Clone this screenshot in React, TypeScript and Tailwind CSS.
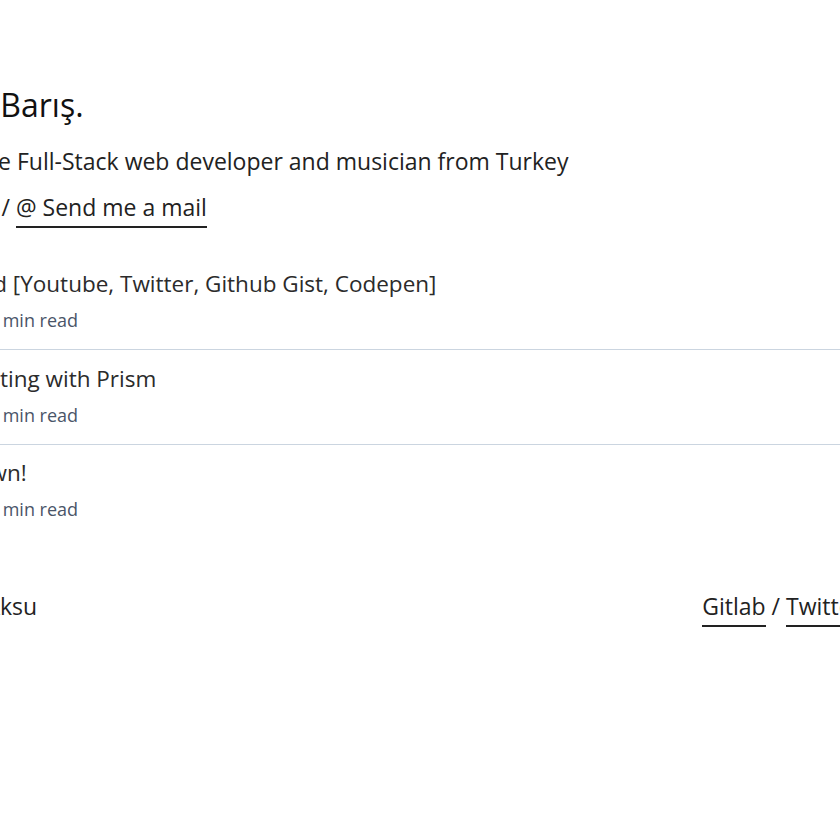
const posts = [
  { lead: "Embed", rest: " [Youtube, Twitter, Github Gist, Codepen]", w: "w-[307px]", date: "Oct 12, 2019 · 4" },
  { lead: "Syntax Highligh", rest: "ting with Prism", w: "w-[300px]", date: "Sep 28, 2019 · 2" },
  { lead: "Hello World, Markdow", rest: "n!", w: "w-[307px]", date: "Sep 21, 2019 · 1" },
];

export default function App() {
  return (
    <div
      className="w-[840px] h-[840px] overflow-hidden bg-white text-[#222]"
      style={{ fontFamily: '"Open Sans", "Noto Sans", sans-serif' }}
    >
      <div className="-ml-[300px] w-[1161px] pt-[85px] whitespace-nowrap">
        <header>
          <h1 className="text-[32px] leading-[40px] text-[#111]">
            <span className="inline-block w-[292px] text-right">Hi, I'm</span> Barış.
          </h1>
          <p className="mt-[20px] text-[23px] leading-[33px]">
            <span className="inline-block w-[311px] text-right">I'm a creative</span> Full-Stack web
            developer and musician from Turkey
          </p>
          <p className="mt-[13px] text-[23px] leading-[33px]">
            <span className="inline-block w-[310px] text-right">
              <a className="pb-[3px] border-b-2 border-[#222]">Github</a> /
            </span>{" "}
            <a className="pb-[3px] border-b-2 border-[#222]">@ Send me a mail</a>
          </p>
        </header>

        <ul className="mt-[43px]">
          {posts.map((post, i) => (
            <li
              key={post.lead}
              className={
                i < posts.length - 1
                  ? "pb-[15px] pt-[12px] first:pt-0 border-b border-[#cbd5e0]"
                  : "pt-[11px] pb-[15px]"
              }
            >
              <h2 className="text-[22.5px] leading-[33px] text-[#2b2b2b]">
                <span className={`inline-block text-right ${post.w}`}>{post.lead}</span>
                {post.rest}
              </h2>
              <div className="mt-[7px] text-[18px] leading-[27px] text-[#4a5568]">
                <span className="inline-block w-[298px] text-right">{post.date}</span> min read
              </div>
            </li>
          ))}
        </ul>

        <footer className="mt-[52px] flex justify-between text-[23px] leading-[33px]">
          <span>
            <span className="inline-block w-[300px] text-right">© 2019 Barış A</span>ksu
          </span>
          <span>
            <a className="pb-[3px] border-b-2 border-[#222]">Gitlab</a> /{" "}
            <a className="pb-[3px] border-b-2 border-[#222]">Twitter</a>
          </span>
        </footer>
      </div>
    </div>
  );
}
